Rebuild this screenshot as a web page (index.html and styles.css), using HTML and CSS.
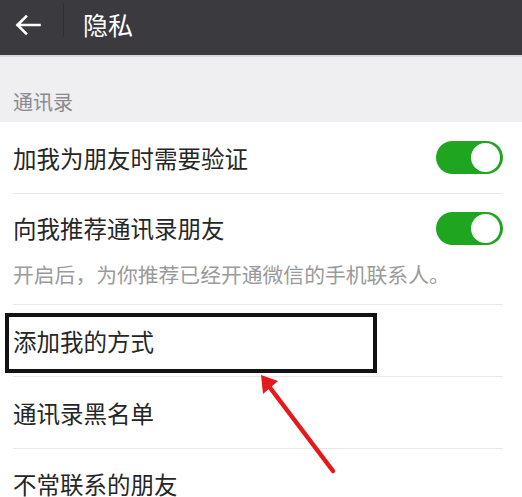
FILE: index.html
```html
<!DOCTYPE html>
<html lang="zh-CN">
<head>
<meta charset="utf-8">
<title>隐私</title>
<link rel="stylesheet" href="styles.css">
</head>
<body>
<div class="page">
  <header class="topbar">
    <div class="back">
      <svg width="26" height="22" viewBox="0 0 26 22"><path d="M24.5 11H2.5M11 2.5L2.5 11L11 19.5" fill="none" stroke="#ffffff" stroke-width="2.6" stroke-linecap="square"/></svg>
    </div>
    <div class="vsep"></div>
    <div class="title">隐私</div>
  </header>
  <div class="section-label">通讯录</div>
  <div class="list">
    <div class="item">
      <div class="inner">
        <span class="label">加我为朋友时需要验证</span>
        <span class="switch"><span class="knob"></span></span>
      </div>
    </div>
    <div class="item">
      <div class="inner col">
        <div class="row-top">
          <span class="label">向我推荐通讯录朋友</span>
          <span class="switch"><span class="knob"></span></span>
        </div>
        <div class="desc">开启后，为你推荐已经开通微信的手机联系人。</div>
      </div>
    </div>
    <div class="item">
      <div class="inner"><span class="label">添加我的方式</span></div>
    </div>
    <div class="item">
      <div class="inner"><span class="label">通讯录黑名单</span></div>
    </div>
    <div class="item">
      <div class="inner last"><span class="label">不常联系的朋友</span></div>
    </div>
  </div>
  <div class="highlight"></div>
  <svg class="pointer" width="522" height="497" viewBox="0 0 522 497">
    <line x1="333" y1="471" x2="268" y2="385" stroke="#e5191c" stroke-width="4.5" stroke-linecap="round"/>
    <polygon points="261,375 263,394 278,381" fill="#e5191c"/>
  </svg>
</div>
</body>
</html>
```
FILE: styles.css
```css
html, body {
  margin: 0;
  padding: 0;
}
body {
  background: #efeef1;
  font-family: "Noto Sans CJK SC", "Noto Sans", sans-serif;
  overflow: hidden;
}
.page {
  position: relative;
  width: 522px;
  height: 497px;
  overflow: hidden;
}
.topbar {
  height: 55px;
  background: #3a3a3f;
  border-bottom: 2px solid #d9d9db;
  display: flex;
  align-items: center;
}
.back {
  width: 26px;
  height: 22px;
  margin-left: 15px;
  margin-top: -5px;
}
.back svg { display: block; }
.vsep {
  width: 1px;
  height: 34px;
  background: #303034;
  margin-left: 22px;
  margin-top: -15px;
  align-self: flex-start;
  position: relative;
  top: 18px;
}
.title {
  color: #ffffff;
  font-size: 25px;
  line-height: 30px;
  margin-left: 19px;
  margin-top: -7px;
}
.section-label {
  height: 65px;
  box-sizing: border-box;
  padding-left: 13px;
  padding-top: 33px;
  font-size: 20px;
  line-height: 24px;
  color: #8a8a8e;
}
.list {
  background: #ffffff;
}
.item {
  padding-left: 13px;
}
.inner {
  margin-right: 19px;
  height: 72px;
  box-sizing: border-box;
  border-bottom: 1px solid #e8e8ea;
  display: flex;
  align-items: center;
  justify-content: space-between;
}
.inner.last {
  height: 60px;
  align-items: flex-start;
  padding-top: 20px;
  border-bottom: none;
}
.inner.col {
  height: 111px;
  flex-direction: column;
  align-items: stretch;
  justify-content: flex-start;
}
.row-top {
  height: 68px;
  display: flex;
  align-items: center;
  justify-content: space-between;
}
.label {
  font-size: 23.5px;
  line-height: 30px;
  color: #262626;
}
.desc {
  font-size: 20.8px;
  line-height: 24px;
  color: #9a9a9a;
}
.switch {
  width: 67px;
  height: 33px;
  border-radius: 17px;
  background: #1fa51f;
  display: flex;
  align-items: center;
  justify-content: flex-end;
  padding-right: 3px;
  box-sizing: border-box;
}
.knob {
  width: 29px;
  height: 29px;
  border-radius: 50%;
  background: #ffffff;
}
.highlight {
  position: absolute;
  left: 5px;
  top: 313px;
  width: 372px;
  height: 60px;
  box-sizing: border-box;
  border: 4px solid #121212;
}
.pointer {
  position: absolute;
  left: 0;
  top: 0;
  pointer-events: none;
}
```
